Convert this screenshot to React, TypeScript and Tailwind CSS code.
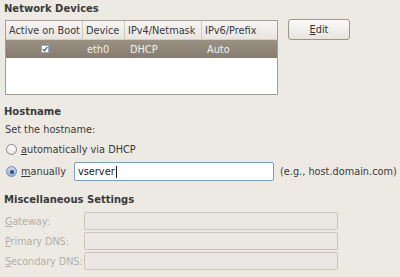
import React from 'react'

const font = { fontFamily: '"DejaVu Sans", "Liberation Sans", sans-serif' }

function U({ c }: { c: string }) {
  return <span className="underline underline-offset-[1px]">{c}</span>
}

function Radio({ checked }: { checked?: boolean }) {
  return (
    <span
      className={
        'inline-flex h-[11px] w-[11px] shrink-0 items-center justify-center rounded-full border ' +
        (checked
          ? 'border-[#6f8cb0] bg-gradient-to-b from-[#c9daf0] to-[#8fb0d8]'
          : 'border-[#8a867e] bg-gradient-to-b from-[#ffffff] to-[#e6e3de]')
      }
    >
      {checked && <span className="h-[4px] w-[4px] rounded-full bg-[#2f4f7a]" />}
    </span>
  )
}

function DisabledField({ mnemonic, rest }: { mnemonic: string; rest: string }) {
  return (
    <div className="flex h-[18px] items-center">
      <span className="w-[84px] shrink-0 whitespace-nowrap pl-[5px] tracking-[-0.1px] text-[#b3afa7]">
        <U c={mnemonic} />
        {rest}
      </span>
      <div className="h-[18px] w-[254px] rounded-[2px] border border-[#c9c5bd] bg-[#ebe8e3]" />
    </div>
  )
}

export default function App() {
  return (
    <div className="h-[277px] w-[400px] overflow-hidden bg-[#edeae4] text-[9.75px] leading-[13px] text-[#3a3a3a]" style={font}>
      {/* Network Devices */}
      <div className="pl-[4px] pt-[2px] text-[10px] font-bold">Network Devices</div>
      <div className="mt-[4px] flex items-start">
        <div className="ml-[5px] mt-[1px] h-[75px] w-[273px] border border-[#a39f96] bg-white">
          <div className="flex h-[19px] items-center border-b border-[#d3cfc7] bg-gradient-to-b from-[#f6f5f2] to-[#e9e6e1]">
            <div className="flex h-full w-[77px] items-center border-r border-[#cfcbc3] pl-[3px]">Active on Boot</div>
            <div className="flex h-full w-[42px] items-center border-r border-[#cfcbc3] pl-[3px]">Device</div>
            <div className="flex h-full w-[77px] items-center border-r border-[#cfcbc3] pl-[3px]">IPv4/Netmask</div>
            <div className="flex h-full flex-1 items-center pl-[3px]">IPv6/Prefix</div>
          </div>
          <div className="flex h-[18px] items-center bg-gradient-to-b from-[#9a9183] to-[#867d70] text-[#f3f0eb]">
            <div className="flex w-[78px] justify-center">
              <span className="flex h-[8px] w-[8px] items-center justify-center border border-[#9ea9b8] bg-white">
                <svg width="6" height="6" viewBox="0 0 6 6">
                  <path d="M0.8 3.2 L2.4 4.8 L5.3 1" fill="none" stroke="#3a64a8" strokeWidth="1.3" />
                </svg>
              </span>
            </div>
            <div className="w-[43px] pl-[3px]">eth0</div>
            <div className="w-[77px] pl-[3px]">DHCP</div>
            <div className="flex-1 pl-[3px]">Auto</div>
          </div>
        </div>
        <button className="ml-[10px] flex h-[21px] w-[62px] items-center justify-center rounded-[3px] border border-[#9a968d] bg-gradient-to-b from-[#fbfaf8] to-[#e7e4de] text-[#333]">
          <U c="E" />dit
        </button>
      </div>

      {/* Hostname */}
      <div className="mt-[10px] pl-[4px] text-[10px] font-bold">Hostname</div>
      <div className="mt-[5px] pl-[5px]">Set the hostname:</div>
      <div className="mt-[6px] flex h-[14px] items-center gap-[4px] pl-[6px]">
        <Radio />
        <span>
          <U c="a" />utomatically via DHCP
        </span>
      </div>
      <div className="mt-[6px] flex h-[19px] items-center pl-[6px]">
        <Radio checked />
        <span className="ml-[4px] w-[53px]">
          <U c="m" />anually
        </span>
        <div className="flex h-[19px] w-[200px] items-center rounded-[2px] border border-[#7b9cc6] bg-white pl-[3px] text-[#222]">
          vserver<span className="ml-[1px] h-[12px] w-[1px] bg-[#222]" />
        </div>
        <span className="ml-[6px]">(e.g., host.domain.com)</span>
      </div>

      {/* Miscellaneous */}
      <div className="mt-[12px] pl-[4px] text-[10px] font-bold">Miscellaneous Settings</div>
      <div className="mt-[6px] flex flex-col gap-[2px]">
        <DisabledField mnemonic="G" rest="ateway:" />
        <DisabledField mnemonic="P" rest="rimary DNS:" />
        <DisabledField mnemonic="S" rest="econdary DNS:" />
      </div>
    </div>
  )
}
